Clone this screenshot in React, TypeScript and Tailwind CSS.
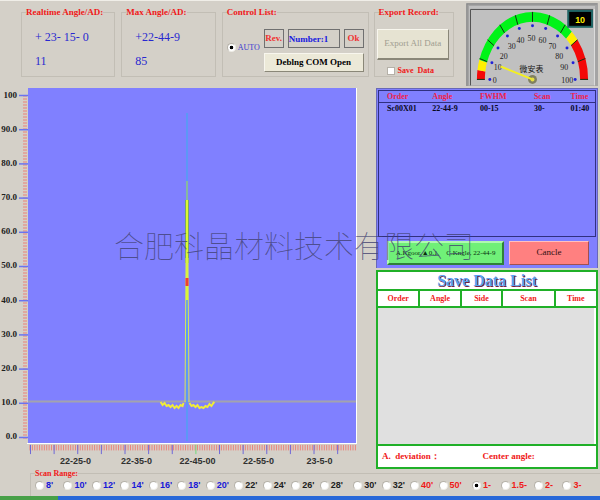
import React from "react";
import clsx from "clsx";

const serif = "font-['Liberation_Serif',serif]";
const sans = "font-['Liberation_Sans',sans-serif]";

const radioStyle =
   "appearance-none shrink-0 size-[9px] rounded-full bg-white border border-[#b5b1a8] border-b-[#eeece6] border-r-[#eeece6] checked:bg-[radial-gradient(circle,#000_32%,#fff_42%)]";

const yLabels = [
   "100",
   "90.0",
   "80.0",
   "70.0",
   "60.0",
   "50.0",
   "40.0",
   "30.0",
   "20.0",
   "10.0",
   "0.0",
];

const xLabels = ["22-25-0", "22-35-0", "22-45-00", "22-55-0", "23-5-0"];

const scanRanges = [
   { name: "8'", color: "text-[#1818d8]" },
   { name: "10'", color: "text-[#1818d8]" },
   { name: "12'", color: "text-[#1818d8]" },
   { name: "14'", color: "text-[#1818d8]" },
   { name: "16'", color: "text-[#1818d8]" },
   { name: "18'", color: "text-[#1818d8]" },
   { name: "20'", color: "text-[#1818d8]" },
   { name: "22'", color: "text-[#202020]" },
   { name: "24'", color: "text-[#202020]" },
   { name: "26'", color: "text-[#202020]" },
   { name: "28'", color: "text-[#202020]", isLast: true },
   { name: "30'", color: "text-[#202020]" },
   { name: "32'", color: "text-[#202020]" },
   { name: "40'", color: "text-[#f01818]" },
   { name: "50'", color: "text-[#f01818]", isLast: true },
   { name: "1-", color: "text-[#f01818]" },
   { name: "1.5-", color: "text-[#f01818]", isLast: true },
   { name: "2-", color: "text-[#f01818]" },
   { name: "3-", color: "text-[#f01818]" },
];

const orderColumns = [
   { heading: "Order", value: "Sc00X01", width: "w-[21%]" },
   { heading: "Angle", value: "22-44-9", width: "w-[22%]" },
   { heading: "FWHM", value: "00-15", width: "w-[25%]" },
   { heading: "Scan", value: "30-", width: "w-[17%]" },
   { heading: "Time", value: "01:40", width: "w-[15%]" },
];

const saveColumns = [
   { heading: "Order", width: "w-[19%]" },
   { heading: "Angle", width: "w-[19%]" },
   { heading: "Side", width: "w-[19%]" },
   { heading: "Scan", width: "w-[24%]" },
   { heading: "Time", width: "w-[19%]" },
];

function Group({
   title,
   className,
   children,
}: {
   title: string;
   className: string;
   children: React.ReactNode;
}) {
   return (
      <fieldset
         className={clsx(
            "min-w-0 h-[70px] border border-[#c2beb5] pl-1",
            className
         )}
      >
         <legend className="text-[9px] leading-[10px] font-bold text-[#f01818] whitespace-nowrap">
            {title}
         </legend>
         {children}
      </fieldset>
   );
}

// point on the dial, 180 degrees is the left end of the scale
const onDial = (deg: number, rx: number, ry: number) => {
   const a = (deg * Math.PI) / 180;
   return [67 + rx * Math.cos(a), 77 - ry * Math.sin(a)];
};

const band = (from: number, to: number) => {
   const [x1, y1] = onDial(from, 56, 68);
   const [x2, y2] = onDial(to, 56, 68);
   const [x3, y3] = onDial(to, 48, 58);
   const [x4, y4] = onDial(from, 48, 58);
   return `M${x1} ${y1}A56 68 0 0 1 ${x2} ${y2}L${x3} ${y3}A48 58 0 0 0 ${x4} ${y4}Z`;
};

const dialLabels = [
   [29, 81],
   [32, 68],
   [38, 56],
   [46, 46],
   [55, 40],
   [66, 38],
   [77, 40],
   [87, 46],
   [94, 56],
   [99, 68],
   [102, 81],
];

function Gauge() {
   return (
      <svg viewBox="0 0 133 84" className="block w-full">
         <rect width="133" height="84" fill="#a4a4a4" />
         <path d="M1 84V1H132" fill="none" stroke="#8a8a8a" />
         <rect x="3" y="3" width="127" height="80" fill="#c0c0c0" />
         <path d="M4.500 83V6.500H128" fill="none" stroke="#505050" />
         <path d="M129.500 6V83" fill="none" stroke="#dcdcdc" />
         <path d={band(180, 172)} fill="#f40808" />
         <path d={band(172, 163)} fill="#fff000" />
         <path d={band(163, 45)} fill="#00f418" />
         <path d={band(45, 36)} fill="#fff000" />
         <path d={band(36, 0)} fill="#f40808" />
         {dialLabels.map(([x, y], i) => {
            const deg = 180 - i * 18;
            const [x1, y1] = onDial(deg, 56, 68);
            const [x2, y2] = onDial(deg, 48, 58);
            const [cx, cy] = onDial(deg, 43, 54);
            return (
               <g key={i}>
                  <line x1={x1} y1={y1} x2={x2} y2={y2} stroke="#103010" />
                  <circle cx={cx} cy={cy} r="1.500" fill="#2020d8" />
                  <text
                     x={x}
                     y={y}
                     fontSize="8"
                     textAnchor="middle"
                     fill="#202020"
                  >
                     {i * 10}
                  </text>
               </g>
            );
         })}
         <text
            x="66"
            y="70"
            fontSize="8"
            textAnchor="middle"
            fill="#101010"
            className="font-['Noto_Sans_CJK_SC',sans-serif]"
         >
            微安表
         </text>
         <circle cx="67" cy="77" r="4.500" fill="#808060" />
         <path d="M35 64L67 77" stroke="#f4f020" strokeWidth="2" />
         <circle cx="67" cy="77" r="2" fill="#e8e040" />
         <rect x="102" y="7" width="26" height="18" fill="#206464" />
         <rect x="104" y="9" width="22" height="14" fill="#000" />
         <text
            x="115"
            y="20"
            fontSize="9"
            fontWeight="bold"
            textAnchor="middle"
            fill="#ffee00"
            className="font-['Liberation_Sans',sans-serif]"
         >
            10
         </text>
      </svg>
   );
}

function Plot() {
   return (
      <svg
         viewBox="0 0 329 355"
         preserveAspectRatio="none"
         className="block h-[355px] w-full bg-[#8080ff]"
      >
         <path d="M0 313.500H329" stroke="#a3a3ae" strokeWidth="2" />
         <path d="M159.500 25V353" stroke="#5c98f6" strokeWidth="2" />
         <path d="M159.500 93V114" stroke="#86b8a0" strokeWidth="2" />
         <path d="M159.500 112V175" stroke="#7aa860" strokeWidth="4" />
         <path d="M159.500 112V212" stroke="#dcf830" strokeWidth="2" />
         <path
            d="M158.500 170L157.500 314M160.500 170L161.500 314"
            stroke="#d4e858"
            fill="none"
         />
         <path d="M159.500 190V198" stroke="#f04030" strokeWidth="3" />
         <path
            d="M133 314l2 3 2-2 2 3 2-1 2 2 2-2 2 3 2-2 2 2 2-3 2 1 1-3M162 315l2 3 2-1 2 2 2-2 2 3 2-1 2 1 2-2 2 1 2-3 2 2 2-3 1-1"
            stroke="#f0ec38"
            strokeWidth="2"
            fill="none"
         />
      </svg>
   );
}

function YAxis() {
   return (
      <svg viewBox="0 0 9 355" className="block w-[9px] h-[355px] shrink-0">
         {Array.from({ length: 115 }, (_, i) => (
            <path key={i} d={`M4 ${8 + i * 3}h4`} stroke="#ec8078" />
         ))}
         {yLabels.map((label, i) => (
            <path
               key={label}
               d={`M0 ${7.5 + i * 34.2}h9`}
               stroke="#6a74f0"
               strokeWidth="1.500"
            />
         ))}
      </svg>
   );
}

function XAxis() {
   return (
      <svg
         viewBox="0 0 331 12"
         preserveAspectRatio="none"
         className="block h-[12px] w-full border-t border-white"
      >
         {Array.from({ length: 137 }, (_, i) => (
            <path key={i} d={`M${3 + i * 2.4} 1v6`} stroke="#ec8078" />
         ))}
         {Array.from({ length: 14 }, (_, i) => (
            <path
               key={i}
               d={`M${3.5 + i * 23.7} 1v10`}
               stroke={i === 7 ? "#70d878" : "#6a64d8"}
            />
         ))}
      </svg>
   );
}

export default function App() {
   return (
      <div
         className={clsx(
            "flex flex-col bg-[#d4d0c8] border-t border-[#f0eee8] overflow-hidden",
            serif
         )}
      >
         <div className="flex items-start pl-[21px] pr-[2px] pt-[2px] h-[87px]">
            <Group title="Realtime Angle/AD:" className="flex-[89] mt-1 mr-1.5">
               <div className="flex flex-col gap-2 pt-3 pl-[9px] text-[12px] leading-4 text-[#2828d0] whitespace-pre">
                  <p>+ 23- 15- 0</p>
                  <p>11</p>
               </div>
            </Group>
            <Group title="Max Angle/AD:" className="flex-[89] mt-1 mr-1.5">
               <div className="flex flex-col gap-2 pt-3 pl-[9px] text-[12px] leading-4 text-[#2828d0]">
                  <p>+22-44-9</p>
                  <p>85</p>
               </div>
            </Group>
            <Group title="Control List:" className="flex-[142] mt-1 mr-[5px]">
               <div className="flex items-center gap-1 pt-3 pr-1">
                  <label className="flex items-center gap-[2px] w-[33px] mb-1.5 text-[8px] text-[#3838d0]">
                     <input
                        type="radio"
                        name="mode"
                        defaultChecked
                        className={radioStyle}
                     />
                     AUTO
                  </label>
                  <div className="flex flex-col flex-1 min-w-0 gap-[5px]">
                     <div className="flex gap-1 text-[9px] font-bold">
                        <button className="w-5 h-[19px] border border-[#707070] text-[#f03030]">
                           Rev.
                        </button>
                        <input
                           aria-label="Number"
                           readOnly
                           value="Number:1"
                           className="flex-1 min-w-0 h-[19px] border border-[#707070] text-[#1818e0]"
                        />
                        <button className="w-5 h-[19px] border border-[#707070] text-[#f03030]">
                           Ok
                        </button>
                     </div>
                     <button className="h-[19px] bg-[#ece9d8] border border-[#f8f6ee] border-b-[#8a8778] border-r-[#8a8778] text-[9px] font-bold text-black whitespace-nowrap">
                        Deblng COM Open
                     </button>
                  </div>
               </div>
            </Group>
            <Group title="Export  Record:" className="flex-[75] mt-1 mr-3">
               <div className="flex flex-col gap-[6px] pt-3 pr-1 -ml-0.5">
                  <button className="h-[31px] bg-[#e6e3d2] border border-[#f8f6ee] border-b-2 border-b-[#8a8778] border-r-[#8a8778] text-[9px] text-[#a09d90] whitespace-nowrap">
                     Export All Data
                  </button>
                  <label className="flex items-center gap-[3px] pl-2.5 text-[8px] leading-[9px] font-bold text-[#f01818] whitespace-pre">
                     <input
                        type="checkbox"
                        className="appearance-none size-2 bg-white border border-[#b5b1a8]"
                     />
                     Save  Data
                  </label>
               </div>
            </Group>
            <div className="flex-[133]">
               <Gauge />
            </div>
         </div>

         <div className="relative flex">
            <div className="flex-[357] min-w-0 mr-[19px]">
               <div className="flex">
                  <div className="flex flex-col justify-between w-[19px] shrink-0 pr-0.5 text-right text-[9px] leading-[14px] font-bold text-[#202020]">
                     {yLabels.map((label) => (
                        <span key={label}>{label}</span>
                     ))}
                  </div>
                  <YAxis />
                  <div className="flex-1 min-w-0 border-r border-white">
                     <Plot />
                  </div>
               </div>
               <div className="pl-[27px]">
                  <XAxis />
               </div>
               <div
                  className={clsx(
                     "grid grid-cols-5 pl-[45px] pr-[7px] text-center text-[9px] leading-3 font-bold text-[#303030]",
                     sans
                  )}
               >
                  {xLabels.map((label) => (
                     <span key={label}>{label}</span>
                  ))}
               </div>
            </div>

            <div className="flex-[222] min-w-0 mr-[2px] flex flex-col gap-[2px]">
               <div className="bg-[#8080ff] border border-[#6868b8] border-b-0 p-px">
                  <div className="h-[147px] border border-[#303080]">
                     <table className="w-full table-fixed text-left text-[8px] leading-[11px] font-bold">
                        <thead className="border-b border-[#303080] text-[#f02048]">
                           <tr>
                              {orderColumns.map((item) => (
                                 <th
                                    key={item.heading}
                                    className={clsx("pl-2", item.width)}
                                 >
                                    {item.heading}
                                 </th>
                              ))}
                           </tr>
                        </thead>
                        <tbody className="text-[#080820]">
                           <tr>
                              {orderColumns.map((item) => (
                                 <td key={item.heading} className="pl-2">
                                    {item.value}
                                 </td>
                              ))}
                           </tr>
                        </tbody>
                     </table>
                  </div>
                  <div className="flex gap-[5px] pl-[9px] pr-[7px] pt-1 pb-[2px]">
                     <button className="flex-[116] min-w-0 h-6 bg-[#70f078] border-2 border-[#b0f8b0] border-b-[#308038] border-r-[#308038] text-[7px] text-[#083010] whitespace-nowrap">
                        A.Kgoor,▲0.1、 C.Kngle, 22-44-9
                     </button>
                     <button className="flex-[80] h-6 bg-[#ff8080] border border-[#ffc0c0] border-b-[#a05050] border-r-[#a05050] text-[9px] text-[#301010]">
                        Cancle
                     </button>
                  </div>
               </div>

               <div className="bg-white border-2 border-[#20b028]">
                  <h2 className="h-[17px] text-center text-[16px] leading-[17px] font-bold text-[#58a0f0] [text-shadow:1px_1px_0_#702040]">
                     Save Data List
                  </h2>
                  <table className="w-full table-fixed text-center text-[8px] leading-[15px] font-bold text-[#f01818] border-y-2 border-[#20b028]">
                     <thead>
                        <tr>
                           {saveColumns.map((item) => (
                              <th
                                 key={item.heading}
                                 className={clsx(
                                    "border-l-2 border-[#20b028] first:border-l-0",
                                    item.width
                                 )}
                              >
                                 {item.heading}
                              </th>
                           ))}
                        </tr>
                     </thead>
                  </table>
                  <div className="h-[136px] bg-[#e0e0e0] border-r-2 border-white" />
                  <div className="flex h-[23px] items-center border-t-2 border-[#20b028] pl-1 text-[9px] font-bold text-[#f01818]">
                     <span className="w-[47%] whitespace-pre">
                        A.  deviation：
                     </span>
                     <span>Center angle:</span>
                  </div>
               </div>
            </div>

            <p className="absolute left-[19%] top-[140px] text-[30px] leading-8 font-thin whitespace-nowrap text-[#404070]/80 pointer-events-none font-['Noto_Sans_CJK_SC',sans-serif]">
               合肥科晶材料技术有限公司
            </p>
         </div>

         <fieldset className="ml-[30px] h-[27px] border-t border-l border-[#c2beb5] pl-1">
            <legend className="text-[8px] leading-[9px] font-bold text-[#f01818]">
               Scan Range:
            </legend>
            <div
               className={clsx(
                  "flex pr-[9px] pt-[2px] text-[9px] leading-[10px] font-bold",
                  sans
               )}
            >
               {scanRanges.map((item) => (
                  <label
                     key={item.name}
                     className={clsx(
                        "flex flex-1 items-center gap-[2px] whitespace-nowrap min-w-0",
                        item.color,
                        item.isLast && "mr-[5px]"
                     )}
                  >
                     <input
                        type="radio"
                        name="range"
                        defaultChecked={item.name === "1-"}
                        className={radioStyle}
                     />
                     {item.name}
                  </label>
               ))}
            </div>
         </fieldset>
         <div className="flex h-[5px] bg-[#2868d8]">
            <div className="w-[58px] bg-[#48a048]" />
         </div>
      </div>
   );
}
